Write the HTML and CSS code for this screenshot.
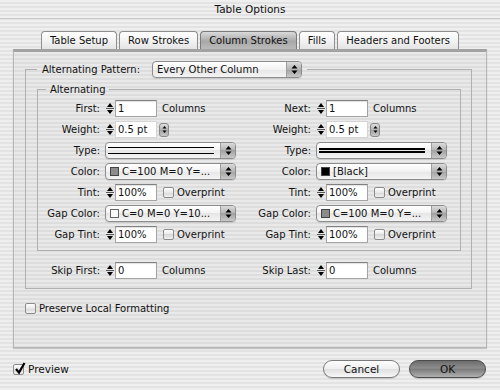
FILE: index.html
```html
<!DOCTYPE html>
<html lang="en">
<head>
  <meta charset="UTF-8" />
  <title>Table Options</title>
  <link rel="stylesheet" href="styles.css">
</head>
<body>
  <div class="titlebar">Table Options</div>
  <div class="content">
    <div class="tabs">
      <div class="tab">Table Setup</div>
      <div class="tab">Row Strokes</div>
      <div class="tab selected">Column Strokes</div>
      <div class="tab">Fills</div>
      <div class="tab">Headers and Footers</div>
    </div>

    <div class="panel">
      <fieldset class="group outer">
        <legend>
          <div class="legend-row">
            <span>Alternating Pattern:</span>
            <div class="popup pattern">
              <div class="val">Every Other Column</div>
              <div class="arr"><svg width="7" height="11" viewBox="0 0 7 11"><path d="M3.5 1 L6.5 4.5 H0.5Z M3.5 10 L6.5 6.5 H0.5Z"/></svg></div>
            </div>
          </div>
        </legend>

        <fieldset class="group inner">
          <legend>Alternating</legend>
          <div class="grid">
            <!-- first / next -->
            <span class="lbl">First:</span>
            <div class="ctl">
              <svg class="spin" width="10" height="17" viewBox="0 0 10 17"><path d="M5 3 L8 7 H2Z M5 14 L8 10 H2Z"/><path d="M1 8.5 H9" stroke="#555" stroke-width="1"/></svg>
              <div class="field">1</div>
              <span class="unit">Columns</span>
            </div>
            <span class="lbl">Next:</span>
            <div class="ctl">
              <svg class="spin" width="10" height="17" viewBox="0 0 10 17"><path d="M5 3 L8 7 H2Z M5 14 L8 10 H2Z"/><path d="M1 8.5 H9" stroke="#555" stroke-width="1"/></svg>
              <div class="field">1</div>
              <span class="unit">Columns</span>
            </div>

            <!-- weight -->
            <span class="lbl">Weight:</span>
            <div class="ctl">
              <svg class="spin" width="10" height="17" viewBox="0 0 10 17"><path d="M5 3 L8 7 H2Z M5 14 L8 10 H2Z"/><path d="M1 8.5 H9" stroke="#555" stroke-width="1"/></svg>
              <div class="field bare">0.5 pt</div>
              <div class="popbtn"><svg width="5" height="9" viewBox="0 0 5 9"><path d="M2.5 1 L4.5 3.5 H0.5Z M2.5 8 L4.5 5.5 H0.5Z"/></svg></div>
            </div>
            <span class="lbl">Weight:</span>
            <div class="ctl">
              <svg class="spin" width="10" height="17" viewBox="0 0 10 17"><path d="M5 3 L8 7 H2Z M5 14 L8 10 H2Z"/><path d="M1 8.5 H9" stroke="#555" stroke-width="1"/></svg>
              <div class="field bare">0.5 pt</div>
              <div class="popbtn"><svg width="5" height="9" viewBox="0 0 5 9"><path d="M2.5 1 L4.5 3.5 H0.5Z M2.5 8 L4.5 5.5 H0.5Z"/></svg></div>
            </div>

            <!-- type -->
            <span class="lbl">Type:</span>
            <div class="ctl">
              <div class="popup wide">
                <div class="val lines thin"><i></i><i></i></div>
                <div class="arr"><svg width="7" height="11" viewBox="0 0 7 11"><path d="M3.5 1 L6.5 4.5 H0.5Z M3.5 10 L6.5 6.5 H0.5Z"/></svg></div>
              </div>
            </div>
            <span class="lbl">Type:</span>
            <div class="ctl">
              <div class="popup wide">
                <div class="val lines thick"><i></i><i></i></div>
                <div class="arr"><svg width="7" height="11" viewBox="0 0 7 11"><path d="M3.5 1 L6.5 4.5 H0.5Z M3.5 10 L6.5 6.5 H0.5Z"/></svg></div>
              </div>
            </div>

            <!-- color -->
            <span class="lbl">Color:</span>
            <div class="ctl">
              <div class="popup wide">
                <div class="val"><span class="swatch cyan"></span>C=100 M=0 Y=...</div>
                <div class="arr"><svg width="7" height="11" viewBox="0 0 7 11"><path d="M3.5 1 L6.5 4.5 H0.5Z M3.5 10 L6.5 6.5 H0.5Z"/></svg></div>
              </div>
            </div>
            <span class="lbl">Color:</span>
            <div class="ctl">
              <div class="popup wide">
                <div class="val"><span class="swatch black"></span>[Black]</div>
                <div class="arr"><svg width="7" height="11" viewBox="0 0 7 11"><path d="M3.5 1 L6.5 4.5 H0.5Z M3.5 10 L6.5 6.5 H0.5Z"/></svg></div>
              </div>
            </div>

            <!-- tint -->
            <span class="lbl">Tint:</span>
            <div class="ctl">
              <svg class="spin" width="10" height="17" viewBox="0 0 10 17"><path d="M5 3 L8 7 H2Z M5 14 L8 10 H2Z"/><path d="M1 8.5 H9" stroke="#555" stroke-width="1"/></svg>
              <div class="field">100%</div>
              <span class="box"></span><span class="cap">Overprint</span>
            </div>
            <span class="lbl">Tint:</span>
            <div class="ctl">
              <svg class="spin" width="10" height="17" viewBox="0 0 10 17"><path d="M5 3 L8 7 H2Z M5 14 L8 10 H2Z"/><path d="M1 8.5 H9" stroke="#555" stroke-width="1"/></svg>
              <div class="field">100%</div>
              <span class="box"></span><span class="cap">Overprint</span>
            </div>

            <!-- gap color -->
            <span class="lbl">Gap Color:</span>
            <div class="ctl">
              <div class="popup wide">
                <div class="val"><span class="swatch paper"></span>C=0 M=0 Y=10...</div>
                <div class="arr"><svg width="7" height="11" viewBox="0 0 7 11"><path d="M3.5 1 L6.5 4.5 H0.5Z M3.5 10 L6.5 6.5 H0.5Z"/></svg></div>
              </div>
            </div>
            <span class="lbl">Gap Color:</span>
            <div class="ctl">
              <div class="popup wide">
                <div class="val"><span class="swatch cyan"></span>C=100 M=0 Y=...</div>
                <div class="arr"><svg width="7" height="11" viewBox="0 0 7 11"><path d="M3.5 1 L6.5 4.5 H0.5Z M3.5 10 L6.5 6.5 H0.5Z"/></svg></div>
              </div>
            </div>

            <!-- gap tint -->
            <span class="lbl">Gap Tint:</span>
            <div class="ctl">
              <svg class="spin" width="10" height="17" viewBox="0 0 10 17"><path d="M5 3 L8 7 H2Z M5 14 L8 10 H2Z"/><path d="M1 8.5 H9" stroke="#555" stroke-width="1"/></svg>
              <div class="field">100%</div>
              <span class="box"></span><span class="cap">Overprint</span>
            </div>
            <span class="lbl">Gap Tint:</span>
            <div class="ctl">
              <svg class="spin" width="10" height="17" viewBox="0 0 10 17"><path d="M5 3 L8 7 H2Z M5 14 L8 10 H2Z"/><path d="M1 8.5 H9" stroke="#555" stroke-width="1"/></svg>
              <div class="field">100%</div>
              <span class="box"></span><span class="cap">Overprint</span>
            </div>
          </div>
        </fieldset>

        <div class="grid skip">
          <span class="lbl">Skip First:</span>
          <div class="ctl">
            <svg class="spin" width="10" height="17" viewBox="0 0 10 17"><path d="M5 3 L8 7 H2Z M5 14 L8 10 H2Z"/><path d="M1 8.5 H9" stroke="#555" stroke-width="1"/></svg>
            <div class="field">0</div>
            <span class="unit">Columns</span>
          </div>
          <span class="lbl">Skip Last:</span>
          <div class="ctl">
            <svg class="spin" width="10" height="17" viewBox="0 0 10 17"><path d="M5 3 L8 7 H2Z M5 14 L8 10 H2Z"/><path d="M1 8.5 H9" stroke="#555" stroke-width="1"/></svg>
            <div class="field">0</div>
            <span class="unit">Columns</span>
          </div>
        </div>
      </fieldset>

      <div class="check preserve"><span class="box first"></span><span class="cap">Preserve Local Formatting</span></div>
    </div>

    <div class="footer">
      <div class="check">
        <span class="box first checked"><svg width="12" height="13" viewBox="0 0 12 13"><path d="M2 7 L5 10.5 L10.5 1" fill="none" stroke="#000" stroke-width="2.2"/></svg></span>
        <span class="cap">Preview</span>
      </div>
      <div class="buttons">
        <button class="btn">Cancel</button>
        <button class="btn default">OK</button>
      </div>
    </div>
  </div>
</body>
</html>
```

FILE: styles.css
```css
* {
  box-sizing: border-box;
}

html, body {
  margin: 0;
  padding: 0;
}

body {
  width: 500px;
  height: 390px;
  overflow: hidden;
  font-family: "DejaVu Sans", sans-serif;
  font-size: 10px;
  color: #111;
  background: repeating-linear-gradient(to bottom, #efefef 0 2px, #e3e3e3 2px 4px);
}

.titlebar {
  height: 19px;
  line-height: 19px;
  text-align: center;
  font-size: 10.5px;
  border-bottom: 1px solid #c8c8c8;
}

.content {
  padding: 12px 13px 0;
}

/* ======== TABS ========= */
.tabs {
  display: flex;
  justify-content: center;
  gap: 2px;
  height: 18px;
}

.tab {
  height: 18px;
  line-height: 18px;
  padding: 0 8px;
  border: 1px solid #8e8e8e;
  border-bottom: none;
  border-radius: 4px 4px 0 0;
  background: linear-gradient(#ffffff, #f3f3f3 50%, #e4e4e4);
  white-space: nowrap;
}

.tab.selected {
  background: linear-gradient(#dadada, #a8a8a8 55%, #bababa);
  border-color: #7a7a7a;
}

.panel {
  border: 1px solid #b6b6b6;
  border-top: 3px solid #a2a2a2;
  padding: 9px 14px 32px 11px;
  background: rgba(0, 0, 0, 0.025);
  box-shadow: 0 1px 1px rgba(0, 0, 0, 0.18);
}

/* ======== GROUPS ========= */
.group {
  margin: 0;
  min-width: 0;
  border: 1px solid #b0b0b0;
}

.outer {
  padding: 5px 10px 9px 11px;
}

.outer > legend {
  padding: 0 5px;
}

.legend-row {
  display: flex;
  align-items: center;
  gap: 12px;
}

.inner {
  padding: 4px 0 7px 0;
}

.inner > legend {
  margin-left: 8px;
  padding: 0 4px;
  line-height: 13px;
}

.grid {
  display: grid;
  grid-template-columns: 62px 138px 63px 1fr;
  column-gap: 5px;
  row-gap: 4px;
  grid-auto-rows: 17px;
  align-items: center;
}

.skip {
  margin: 11px 0 0 1px;
}

.lbl {
  text-align: right;
  white-space: nowrap;
}

.ctl {
  display: flex;
  align-items: center;
  height: 17px;
  white-space: nowrap;
}

/* ======== CONTROLS ========= */
.spin {
  flex: none;
  display: block;
}

.field {
  width: 42px;
  height: 17px;
  padding-left: 2px;
  line-height: 16px;
  background: #fff;
  border: 1px solid #a4a4a4;
  border-top-color: #808080;
  box-shadow: inset 0 1px 1px rgba(0, 0, 0, 0.12);
}

.field.bare {
  border-color: #d4d4d4;
  box-shadow: none;
}

.unit {
  margin-left: 5px;
}

.popbtn {
  width: 10px;
  height: 14px;
  margin-left: 2px;
  display: flex;
  align-items: center;
  justify-content: center;
  border: 1px solid #8a8a8a;
  border-radius: 3px;
  background: linear-gradient(#dedede, #b2b2b2 50%, #a2a2a2 50%, #c8c8c8);
}

.popup {
  display: flex;
  height: 17px;
  border: 1px solid #8c8c8c;
  border-radius: 4px;
  overflow: hidden;
  background: linear-gradient(#ffffff, #f2f2f2 50%, #e6e6e6 50%, #f4f4f4);
  box-shadow: 0 1px 1px rgba(0, 0, 0, 0.1);
}

.popup.pattern {
  width: 150px;
}

.popup.wide {
  width: 131px;
}

.popup .val {
  flex: 1;
  display: flex;
  align-items: center;
  gap: 3px;
  padding-left: 4px;
  overflow: hidden;
  white-space: nowrap;
}

.popup .arr {
  width: 15px;
  flex: none;
  display: flex;
  align-items: center;
  justify-content: center;
  border-left: 1px solid #9e9e9e;
  background: linear-gradient(#dadada, #b4b4b4 50%, #a2a2a2 50%, #c8c8c8);
}

.popup .lines {
  flex-direction: column;
  align-items: stretch;
  justify-content: center;
  padding: 0 6px 0 2px;
}

.popup .lines i {
  display: block;
  background: #000;
}

.popup .lines.thin {
  gap: 5px;
}

.popup .lines.thin i {
  height: 1px;
}

.popup .lines.thick {
  gap: 1px;
}

.popup .lines.thick i {
  height: 2px;
}

.swatch {
  width: 9px;
  height: 9px;
  flex: none;
  border: 1px solid #444;
}

.swatch.cyan {
  background: #8c8c8c;
}

.swatch.black {
  background: #000;
}

.swatch.paper {
  background: #fafafa;
  border-color: #666;
}

.box {
  width: 11px;
  height: 11px;
  flex: none;
  margin-left: 6px;
  border: 1px solid #8c8c8c;
  border-radius: 2px;
  background: linear-gradient(#ffffff, #e8e8e8 50%, #d8d8d8 50%, #f0f0f0);
  position: relative;
}

.box.first {
  margin-left: 0;
}

.box svg {
  position: absolute;
  left: 0;
  top: -3px;
}

.cap {
  margin-left: 3px;
}

.check {
  display: flex;
  align-items: center;
  height: 13px;
}

.preserve {
  margin-top: 13px;
}

/* ======== FOOTER ========= */
.footer {
  display: flex;
  align-items: center;
  justify-content: space-between;
  margin-top: 12px;
  height: 18px;
}

.footer .check {
  height: 18px;
}

.footer .cap {
  margin-left: 4px;
  font-size: 10.5px;
}

.buttons {
  display: flex;
  gap: 9px;
  padding-right: 1px;
}

.btn {
  width: 77px;
  height: 18px;
  padding: 0;
  font-family: inherit;
  font-size: 10.5px;
  color: #111;
  border: 1px solid #7c7c7c;
  border-radius: 9px;
  background: linear-gradient(#fdfdfd, #efefef 50%, #dfdfdf 50%, #f7f7f7);
  box-shadow: 0 1px 1px rgba(0, 0, 0, 0.15);
}

.btn.default {
  border-color: #4c4c4c;
  background: linear-gradient(#6c6c6c, #8e8e8e 45%, #7a7a7a 50%, #b0b0b0);
}
```
